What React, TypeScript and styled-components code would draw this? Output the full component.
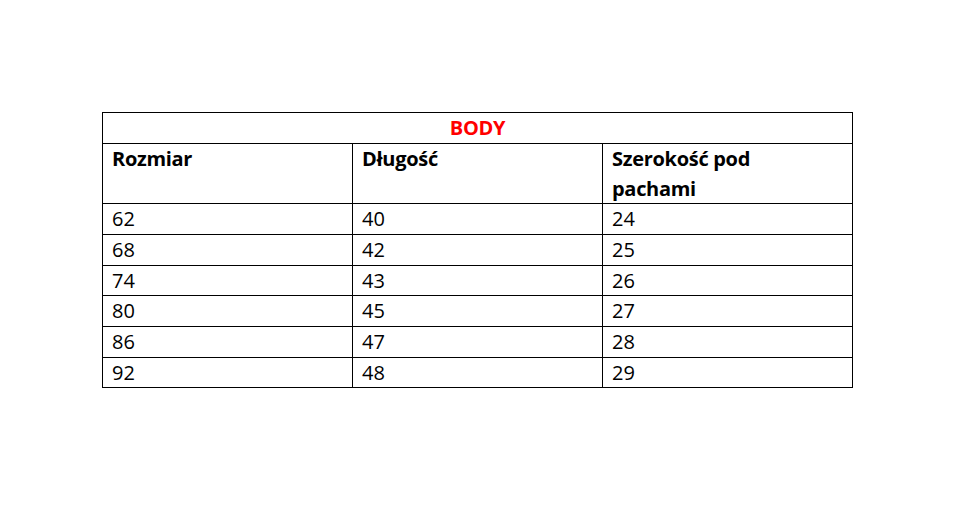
import styled, { createGlobalStyle } from 'styled-components'

const GlobalStyle = createGlobalStyle`
  html, body {
    margin: 0;
    padding: 0;
    background: #ffffff;
  }
  body {
    font-family: "Open Sans", "Liberation Sans", sans-serif;
  }
`

const Page = styled.div`
  width: 963px;
  height: 508px;
  box-sizing: border-box;
  padding: 112px 0 0 102px;
`

const SizeTable = styled.table`
  border-collapse: collapse;
  width: 751px;
  table-layout: fixed;
  color: #000000;
  font-size: 20px;
  line-height: 29.67px;
`

const Cell = styled.td<{ $bold?: boolean }>`
  border: 1px solid #000000;
  padding: 0 9px;
  vertical-align: top;
  font-weight: ${p => (p.$bold ? 700 : 400)};
  letter-spacing: ${p => (p.$bold ? '-0.3px' : '0')};
`

const TitleCell = styled.td`
  border: 1px solid #000000;
  padding: 0;
  text-align: center;
  color: #ff0000;
  font-weight: 700;
  letter-spacing: -0.3px;
  height: 30px;
  line-height: 30px;
`

type SizeRow = {
  size: string
  length: string
  width: string
}

const rows: SizeRow[] = [
  { size: '62', length: '40', width: '24' },
  { size: '68', length: '42', width: '25' },
  { size: '74', length: '43', width: '26' },
  { size: '80', length: '45', width: '27' },
  { size: '86', length: '47', width: '28' },
  { size: '92', length: '48', width: '29' },
]

const App = () => {
  return (
    <>
      <GlobalStyle />
      <Page>
        <SizeTable>
          <colgroup>
            <col style={{ width: 250 }} />
            <col style={{ width: 250 }} />
            <col style={{ width: 250 }} />
          </colgroup>
          <tbody>
            <tr>
              <TitleCell colSpan={3}>BODY</TitleCell>
            </tr>
            <tr>
              <Cell $bold>Rozmiar</Cell>
              <Cell $bold>Długość</Cell>
              <Cell $bold>
                Szerokość pod
                <br />
                pachami
              </Cell>
            </tr>
            {rows.map(row => (
              <tr key={row.size}>
                <Cell>{row.size}</Cell>
                <Cell>{row.length}</Cell>
                <Cell>{row.width}</Cell>
              </tr>
            ))}
          </tbody>
        </SizeTable>
      </Page>
    </>
  )
}

export default App
